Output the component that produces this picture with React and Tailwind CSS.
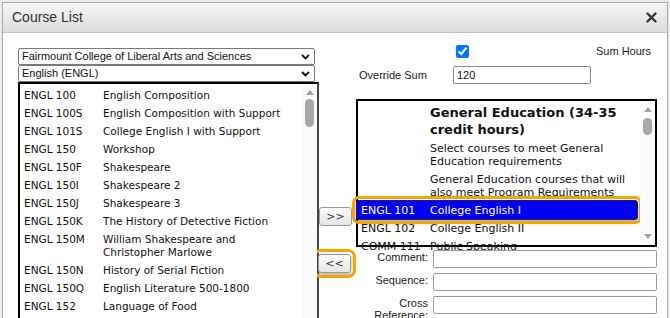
import { useState } from 'react'

const leftCourses = [
  ['ENGL 100', 'English Composition'],
  ['ENGL 100S', 'English Composition with Support'],
  ['ENGL 101S', 'College English I with Support'],
  ['ENGL 150', 'Workshop'],
  ['ENGL 150F', 'Shakespeare'],
  ['ENGL 150I', 'Shakespeare 2'],
  ['ENGL 150J', 'Shakespeare 3'],
  ['ENGL 150K', 'The History of Detective Fiction'],
  ['ENGL 150M', 'William Shakespeare and Christopher Marlowe'],
  ['ENGL 150N', 'History of Serial Fiction'],
  ['ENGL 150Q', 'English Literature 500-1800'],
  ['ENGL 152', 'Language of Food'],
]

const rightRows = [
  ['', 'Select courses to meet General Education requirements'],
  ['', 'General Education courses that will also meet Program Requirements'],
  ['ENGL 101', 'College English I', true],
  ['ENGL 102', 'College English II'],
  ['COMM 111', 'Public Speaking'],
]

function Chevron() {
  return (
    <svg width="9" height="6" viewBox="0 0 9 6" className="shrink-0">
      <path d="M1 1 L4.5 4.5 L8 1" fill="none" stroke="#111" strokeWidth="1.8" />
    </svg>
  )
}

function Select({ label }) {
  return (
    <div className="h-[17px] w-[297px] border border-[#7a7a7a] rounded-[2px] bg-white flex items-center justify-between pl-[3px] pr-[4px] text-[11px] text-[#111] font-['Liberation_Sans',Arial,sans-serif]">
      <span>{label}</span>
      <Chevron />
    </div>
  )
}

function Scrollbar({ thumbTop, down }) {
  return (
    <div className="w-[15px] shrink-0 bg-[#fafafa] relative flex flex-col items-center">
      <svg width="8" height="5" viewBox="0 0 8 5" className="mt-[6px]">
        <polygon points="0,5 4,0 8,5" fill="#a3a3a3" />
      </svg>
      <div className={`w-[9px] rounded-full bg-[#a8a8a8] ${thumbTop}`} />
      {down && (
        <svg width="8" height="5" viewBox="0 0 8 5" className="absolute bottom-[6px]">
          <polygon points="0,0 8,0 4,5" fill="#a3a3a3" />
        </svg>
      )}
    </div>
  )
}

function NavButton({ children, focused }) {
  return (
    <button
      className={`w-[33px] h-[19px] border border-[#9a9a9a] rounded-[3px] bg-gradient-to-b from-[#fdfdfd] to-[#e4e4e4] text-[11px] text-[#333] leading-none font-['DejaVu_Sans',sans-serif] ${
        focused ? 'outline-[3px] outline outline-[#f4a700] outline-offset-[2px] shadow-[0_2px_4px_rgba(0,0,0,0.35)]' : ''
      }`}
    >
      {children}
    </button>
  )
}

function FormRow({ label, className }) {
  return (
    <div className={`flex items-start ${className}`}>
      <div className="w-[72px] text-right text-[11px] leading-[12px] text-[#222] font-['Liberation_Sans',Arial,sans-serif] pt-[1px]">
        {label}
      </div>
      <div className="ml-[5px] w-[224px] h-[18px] border border-[#9a9a9a] rounded-[2px] bg-white" />
    </div>
  )
}

export default function App() {
  const [sumHours, setSumHours] = useState(true)

  return (
    <div className="w-[670px] h-[318px] overflow-hidden bg-[#ececec] pl-[2px] pt-[2px]">
      <div className="w-[666px] h-[330px] border border-[#a9a9a9] bg-white">
        {/* Title bar */}
        <div className="h-[30px] flex items-center justify-between pl-[9px] pr-[10px] bg-gradient-to-b from-[#f7f7f7] to-[#dcdcdc] border-b border-[#c4c4c4]">
          <span className="text-[14px] text-[#333] font-['Liberation_Sans',Arial,sans-serif]">Course List</span>
          <svg width="11" height="11" viewBox="0 0 11 11">
            <path d="M1.5 1.5 L9.5 9.5 M9.5 1.5 L1.5 9.5" stroke="#333" strokeWidth="2.4" strokeLinecap="round" />
          </svg>
        </div>

        <div className="flex">
          {/* Left column */}
          <div className="ml-[15px] pt-[15px] w-[301px] shrink-0">
            <Select label="Fairmount College of Liberal Arts and Sciences" />
            <Select label="English (ENGL)" />
            <div className="w-[301px] h-[300px] border-2 border-black border-r-[#444] flex font-['DejaVu_Sans',sans-serif] text-[10.5px] text-[#111]">
              <div className="flex-1 pt-[2px] pl-[4px]">
                {leftCourses.map(([code, title]) => (
                  <div key={code} className="flex py-[2.5px] leading-[13px]">
                    <span className="w-[79px] shrink-0">{code}</span>
                    <span className="max-w-[180px]">{title}</span>
                  </div>
                ))}
              </div>
              <Scrollbar thumbTop="mt-[4px] h-[28px]" />
            </div>
          </div>

          {/* Move buttons */}
          <div className="w-[37px] shrink-0 pt-[174px] flex flex-col">
            <NavButton>&gt;&gt;</NavButton>
            <div className="mt-[23px] -ml-[1px]">
              <NavButton focused>&lt;&lt;</NavButton>
            </div>
          </div>

          {/* Right column */}
          <div className="w-[301px] shrink-0 pt-[12px] font-['Liberation_Sans',Arial,sans-serif] text-[11px] text-[#222]">
            <div className="flex items-center h-[13px]">
              <input
                type="checkbox"
                checked={sumHours}
                onChange={() => setSumHours(!sumHours)}
                className="ml-[100px] w-[13px] h-[13px] m-0 accent-[#0075ff]"
              />
              <span className="ml-[127px]">Sum Hours</span>
            </div>
            <div className="flex items-center mt-[8px]">
              <span className="ml-[3px] w-[94px]">Override Sum</span>
              <div className="w-[138px] h-[18px] border border-[#8a8a8a] rounded-[2px] flex items-center pl-[3px] text-[11px] text-[#111]">
                120
              </div>
            </div>

            <div className="mt-[15px] w-[301px] h-[148px] border-2 border-black flex font-['DejaVu_Sans',sans-serif] text-[11px] text-[#111]">
              <div className="flex-1 min-w-0">
                <div className="pl-[72px] pt-[3px] pb-[1px] text-[13px] font-bold leading-[17px] text-[#111]">
                  General Education (34-35 credit hours)
                </div>
                {rightRows.map(([code, title, selected]) => (
                  <div
                    key={title}
                    className={`flex py-[2.5px] leading-[13px] ${
                      selected
                        ? 'relative -ml-[2px] mr-[2px] bg-[#0000f5] text-white border border-[#1d1d6b] -my-px outline-[3px] outline outline-[#f4a700] outline-offset-[1px] rounded-[3px] shadow-[0_2px_4px_rgba(0,0,0,0.35)]'
                        : ''
                    }`}
                  >
                    <span className={`shrink-0 ${selected ? 'w-[73px] pl-[4px]' : 'w-[72px] pl-[3px]'}`}>{code}</span>
                    <span>{title}</span>
                  </div>
                ))}
              </div>
              <Scrollbar thumbTop="mt-[6px] h-[17px]" down />
            </div>

            <FormRow label="Comment:" className="mt-[3px]" />
            <FormRow label="Sequence:" className="mt-[5px]" />
            <FormRow label={<>Cross<br />Reference:</>} className="mt-[5px]" />
          </div>
        </div>
      </div>
    </div>
  )
}
